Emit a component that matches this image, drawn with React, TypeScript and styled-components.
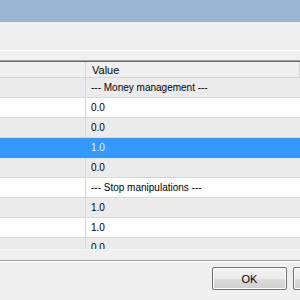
import React from "react";
import styled, { createGlobalStyle } from "styled-components";

const Global = createGlobalStyle`
  html, body { margin: 0; padding: 0; }
  body {
    width: 300px;
    height: 300px;
    overflow: hidden;
    background: #f0f0f0;
    font-family: "Liberation Sans", Arial, sans-serif;
    font-size: 10px;
    color: #000;
  }
`;

const Window = styled.div`
  width: 300px;
  height: 300px;
  display: flex;
  flex-direction: column;
  background: #f0f0f0;
  overflow: hidden;
`;

const TitleBar = styled.div`
  height: 22px;
  flex: none;
  background: #9ab5d2;
`;

const Toolbar = styled.div`
  height: 28px;
  flex: none;
  background: #f0f0f0;
  border-bottom: 1px solid #ffffff;
`;

const GridArea = styled.div`
  flex: none;
  padding-top: 9px;
  height: 190px;
  display: flex;
  flex-direction: column;
`;

const Grid = styled.div`
  flex: 1;
  overflow: hidden;
  border-top: 1px solid #a0a0a0;
  box-shadow: inset 0 1px 0 #696969;
  padding-top: 1px;
  border-bottom: 1px solid #f8f8f8;
`;

const HeaderRow = styled.div`
  display: grid;
  grid-template-columns: 86px 1fr;
  height: 15px;
  border-bottom: 1px solid #d5d5d5;
  background: #f0f0f0;
`;

const HeaderCell = styled.div`
  padding-left: 6px;
  line-height: 16px;
  font-size: 11px;
  white-space: nowrap;
  border-right: 1px solid #d5d5d5;
`;

const Row = styled.div<{ $tone: "white" | "gray" | "selected" }>`
  display: grid;
  grid-template-columns: 86px 1fr;
  height: 19px;
  border-bottom: 1px solid ${(p) => (p.$tone === "selected" ? "#3399ff" : "#d8d8d8")};
  background: ${(p) =>
    p.$tone === "selected" ? "#3399ff" : p.$tone === "gray" ? "#ebebeb" : "#ffffff"};
  color: ${(p) => (p.$tone === "selected" ? "#e8f3ff" : "#000")};
`;

const NameCell = styled.div<{ $sel: boolean }>`
  border-right: 1px solid ${(p) => (p.$sel ? "#3399ff" : "#d5d5d5")};
`;

const ValueCell = styled.div`
  padding-left: 5px;
  line-height: 20px;
  white-space: nowrap;
`;

const Footer = styled.div`
  flex: 1;
  margin-top: 10px;
  margin-right: -68px;
  border-top: 1px solid #a0a0a0;
  box-shadow: inset 0 1px 0 #ffffff;
  display: flex;
  justify-content: flex-end;
  align-items: flex-start;
  padding-top: 6px;
  gap: 6px;
`;

const Button = styled.button`
  width: 75px;
  height: 23px;
  border: 1px solid #707070;
  border-radius: 2px;
  background: linear-gradient(#f2f2f2, #ebebeb 50%, #dddddd 51%, #cfcfcf);
  box-shadow: inset 0 0 0 1px #fcfcfc;
  font-family: "Liberation Sans", Arial, sans-serif;
  font-size: 11px;
  color: #000;
  padding: 0;
`;

type Tone = "white" | "gray" | "selected";
const rows: { value: string; tone: Tone }[] = [
  { value: "--- Money management ---", tone: "gray" },
  { value: "0.0", tone: "white" },
  { value: "0.0", tone: "gray" },
  { value: "1.0", tone: "selected" },
  { value: "0.0", tone: "gray" },
  { value: "--- Stop manipulations ---", tone: "white" },
  { value: "1.0", tone: "gray" },
  { value: "1.0", tone: "white" },
  { value: "0.0", tone: "gray" },
];

export default function App() {
  return (
    <Window>
      <Global />
      <TitleBar />
      <Toolbar />
      <GridArea>
        <Grid>
          <HeaderRow>
            <HeaderCell />
            <HeaderCell>Value</HeaderCell>
          </HeaderRow>
          {rows.map((r, i) => (
            <Row key={i} $tone={r.tone}>
              <NameCell $sel={r.tone === "selected"} />
              <ValueCell>{r.value}</ValueCell>
            </Row>
          ))}
        </Grid>
      </GridArea>
      <Footer>
        <Button>OK</Button>
        <Button>Cancel</Button>
      </Footer>
    </Window>
  );
}
